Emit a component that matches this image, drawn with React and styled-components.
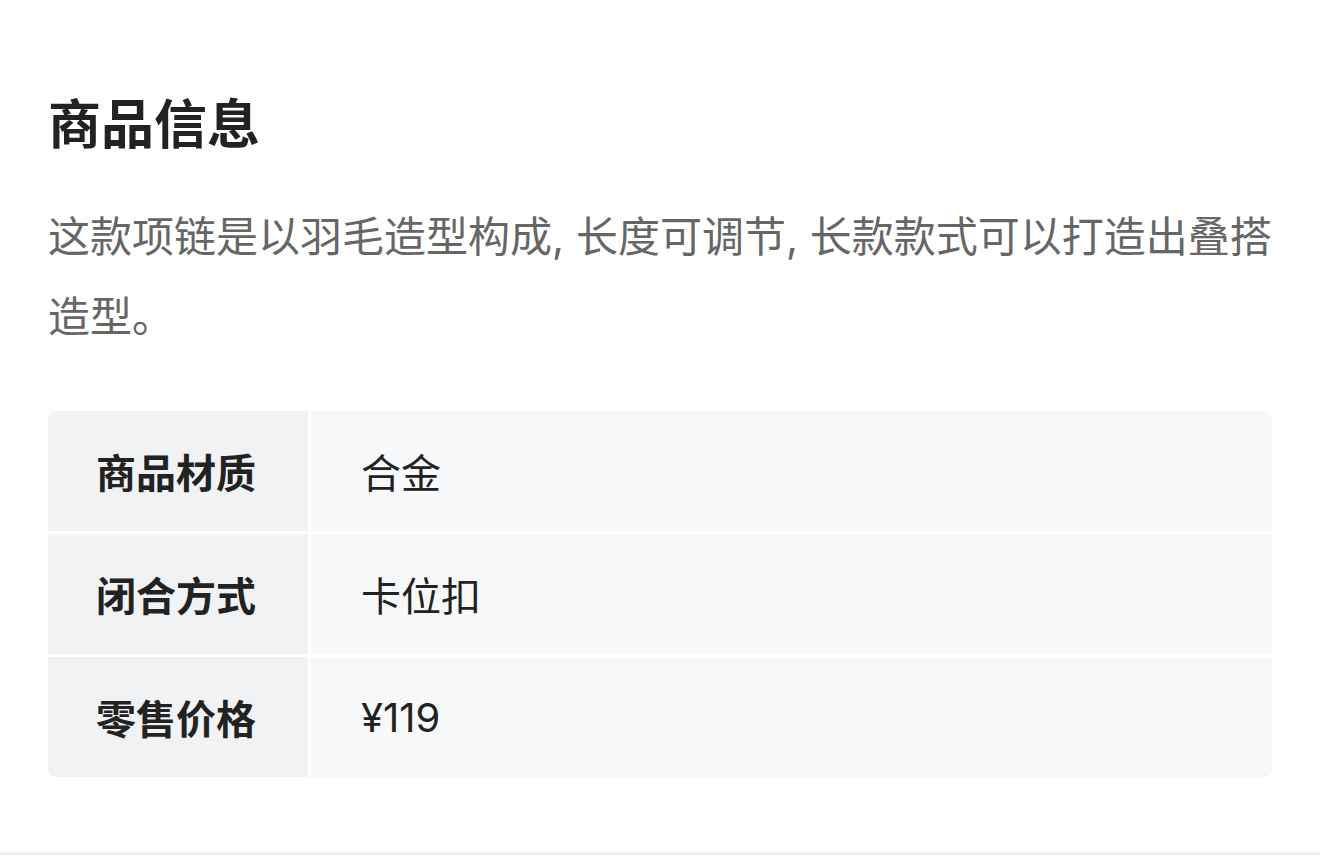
import React from "react";
import styled, { createGlobalStyle } from "styled-components";

const specs = [
  { label: "商品材质", value: "合金" },
  { label: "闭合方式", value: "卡位扣" },
  { label: "零售价格", value: "¥119" },
];

const App = () => {
  return (
    <>
      <GlobalStyle />
      <Section>
        <Title>商品信息</Title>
        <Desc>
          这款项链是以羽毛造型构成, 长度可调节, 长款款式可以打造出叠搭造型。
        </Desc>
        <Table>
          {specs.map((item) => (
            <Row key={item.label}>
              <Label>{item.label}</Label>
              <Value>{item.value}</Value>
            </Row>
          ))}
        </Table>
      </Section>
    </>
  );
};

export default App;

const GlobalStyle = createGlobalStyle`
  * {
    box-sizing: border-box;
  }

  body {
    margin: 0;
    background: #fff;
    font-family: Inter, "Noto Sans CJK SC", sans-serif;
  }
`;

const Section = styled.div`
  padding: 89px 48px 75px;
  border-bottom: 3px solid #f0f0f0;
`;

const Title = styled.h2`
  margin: 0;
  font-size: 53px;
  line-height: 72px;
  font-weight: 700;
  color: #222;
`;

const Desc = styled.p`
  margin: 36px 0 54px;
  font-size: 42px;
  line-height: 80px;
  color: #666;
`;

const Table = styled.div`
  display: flex;
  flex-direction: column;
  gap: 3px;
  border-radius: 8px;
  overflow: hidden;
`;

const Row = styled.div`
  display: grid;
  grid-template-columns: 260px 1fr;
  gap: 3px;
  height: 120px;
`;

const Cell = styled.div`
  display: flex;
  align-items: center;
  padding-left: 48px;
  font-size: 40px;
  color: #222;
`;

const Label = styled(Cell)`
  background: #f1f2f4;
  font-weight: 700;
`;

const Value = styled(Cell)`
  background: #f7f8fa;
  padding-left: 50px;
`;
